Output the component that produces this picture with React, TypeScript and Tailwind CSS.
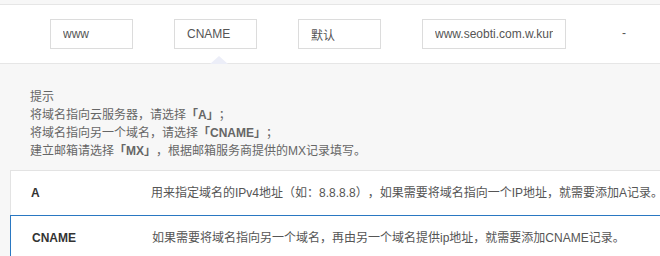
import React from "react";

const FONT = { fontFamily: '"Liberation Sans", "Noto Sans CJK SC", sans-serif' };

const fields = [
  { value: "www", width: "w-[83px]", cell: "w-[124px]" },
  { value: "CNAME", width: "w-[83px]", cell: "w-[124px]", active: true },
  { value: "默认", width: "w-[83px]", cell: "w-[124px]" },
  { value: "www.seobti.com.w.kunlun", width: "w-[144px]", cell: "w-[200px]" },
];

const types = [
  {
    name: "A",
    desc: "用来指定域名的IPv4地址（如：8.8.8.8），如果需要将域名指向一个IP地址，就需要添加A记录。",
  },
  {
    name: "CNAME",
    desc: "如果需要将域名指向另一个域名，再由另一个域名提供ip地址，就需要添加CNAME记录。",
    selected: true,
  },
];

export default function App() {
  return (
    <div
      className="h-[256px] w-[660px] overflow-hidden bg-[#f7f7f7] text-xs [text-spacing-trim:space-all]"
      style={FONT}
    >
      {/* Editable record row */}
      <div className="mt-1 flex h-[60px] items-start border-y border-[#e6e6e6] bg-white pl-[50px] pt-[14px]">
        {fields.map((f) => (
          <div key={f.value} className={`relative h-[46px] shrink-0 ${f.cell}`}>
            <input
              readOnly
              value={f.value}
              className={`h-[30px] ${f.width} border border-[#dcdcdc] bg-white px-3 text-xs text-[#555] outline-none`}
              style={FONT}
            />
            {f.active && (
              <span className="absolute left-[36px] top-[37px] h-0 w-0 border-x-[9px] border-b-[8px] border-x-transparent border-b-[#eceef8]" />
            )}
          </div>
        ))}
        <div className="pt-[6px] text-[#555]">-</div>
      </div>

      {/* Hints */}
      <div className="px-[30px] pt-[24px] leading-[18px] text-[#666]">
        <p>提示</p>
        <p>
          将域名指向云服务器，请选择<b className="font-bold">「A」</b>；
        </p>
        <p>
          将域名指向另一个域名，请选择<b className="font-bold">「CNAME」</b>；
        </p>
        <p>
          建立邮箱请选择<b className="font-bold">「MX」</b>，根据邮箱服务商提供的MX记录填写。
        </p>
      </div>

      {/* Record type list */}
      <div className="ml-[10px] mt-[10px] w-[660px] border-l border-t border-[#e3e3e3] bg-white">
        {types.map((t) => (
          <div
            key={t.name}
            className={`flex h-[44px] items-center ${
              t.selected ? "-ml-px border-l border-t border-[#2a78c2] pl-[21px]" : "pl-[20px]"
            }`}
          >
            <div className="w-[120px] shrink-0 font-bold text-[#333]">{t.name}</div>
            <div className="whitespace-nowrap text-[#555]">{t.desc}</div>
          </div>
        ))}
      </div>
    </div>
  );
}
